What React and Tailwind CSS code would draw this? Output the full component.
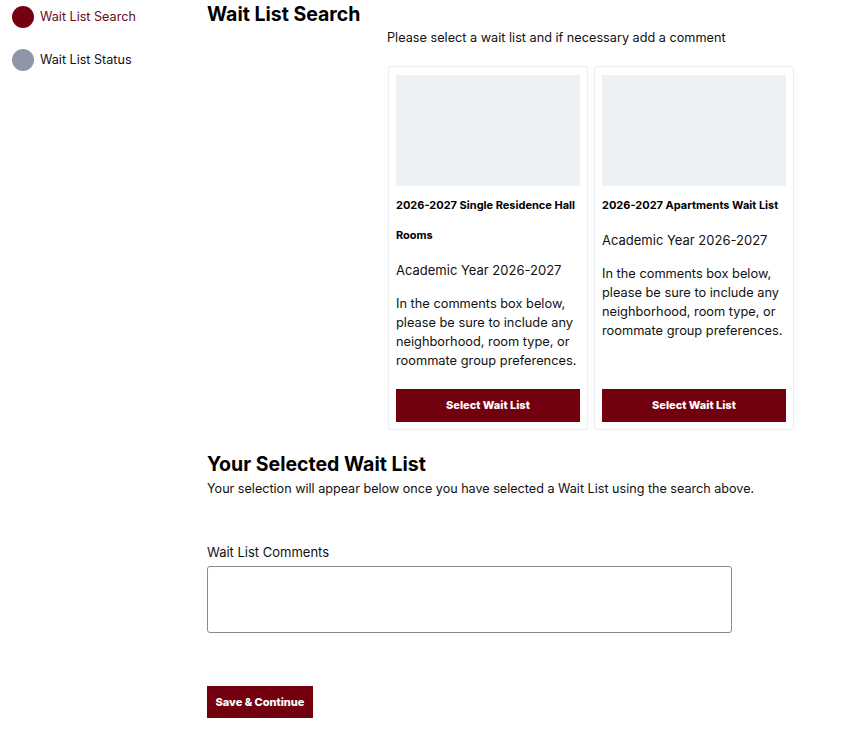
export default function App() {
  const font = { fontFamily: "Inter, 'Open Sans', sans-serif" };
  const Card = ({ title }) => (
    <div className="flex w-[200px] flex-col rounded-[3px] border border-[#eceff1] bg-white px-[7px] pt-[8px] pb-[7px] shadow-[0_0_2px_rgba(0,0,0,0.04)]">
      <div className="h-[111px] w-full bg-[#edf1f3]" />
      <div className="mt-[4px] text-[11px] font-bold leading-[30px] text-black">{title}</div>
      <div className="mt-[10px] text-[13px] leading-[20px] text-[#111]">Academic Year 2026-2027</div>
      <div className="mt-[14px] text-[12.8px] leading-[19px] text-[#111]">
        In the comments box below, please be sure to include any neighborhood, room type, or roommate group preferences.
      </div>
      <button className="mt-auto h-[33px] w-full bg-[#73000f] text-[11px] font-extrabold text-white">Select Wait List</button>
    </div>
  );
  return (
    <div className="flex min-h-[745px] w-[842px] bg-white text-[#111]" style={font}>
      <div className="w-[207px] shrink-0 pl-[12px] pt-[6px]">
        <div className="flex h-[22px] items-center gap-[6px]">
          <span className="h-[22px] w-[22px] rounded-full bg-[#75000f]" />
          <span className="text-[12.6px] text-[#6b0a18]">Wait List Search</span>
        </div>
        <div className="mt-[21px] flex h-[22px] items-center gap-[6px]">
          <span className="h-[22px] w-[22px] rounded-full bg-[#8e95a7]" />
          <span className="text-[12.6px] text-[#111]">Wait List Status</span>
        </div>
      </div>
      <div className="w-[590px] pt-[1px]">
        <h1 className="text-[19.5px] font-bold leading-[26px] text-black">Wait List Search</h1>
        <p className="ml-[180px] mt-[1px] text-[12.7px] leading-[20px]">Please select a wait list and if necessary add a comment</p>
        <div className="ml-[181px] mt-[18px] flex h-[364px] gap-[6px]">
          <Card title="2026-2027 Single Residence Hall Rooms" />
          <Card title="2026-2027 Apartments Wait List" />
        </div>
        <h2 className="mt-[21px] text-[19.5px] font-bold leading-[26px] text-black">Your Selected Wait List</h2>
        <p className="mt-[2px] text-[12.6px] leading-[20px]">Your selection will appear below once you have selected a Wait List using the search above.</p>
        <label className="mt-[43px] block text-[13px] leading-[20px]">Wait List Comments</label>
        <textarea className="mt-[4px] block h-[67px] w-[525px] resize-none rounded-[3px] border border-[#8a8a8a]" />
        <button className="mt-[53px] h-[32px] w-[106px] bg-[#73000f] text-[11px] font-extrabold text-white">Save &amp; Continue</button>
      </div>
    </div>
  );
}
